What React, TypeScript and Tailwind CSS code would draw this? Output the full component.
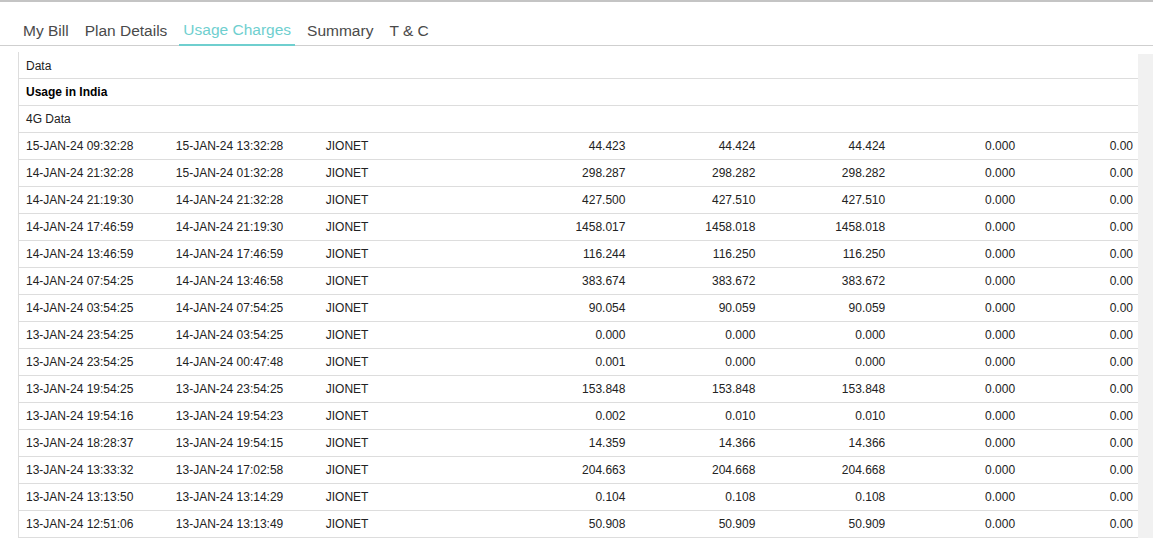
const rows = [
["15-JAN-24 09:32:28","15-JAN-24 13:32:28","44.423","44.424","44.424"],
["14-JAN-24 21:32:28","15-JAN-24 01:32:28","298.287","298.282","298.282"],
["14-JAN-24 21:19:30","14-JAN-24 21:32:28","427.500","427.510","427.510"],
["14-JAN-24 17:46:59","14-JAN-24 21:19:30","1458.017","1458.018","1458.018"],
["14-JAN-24 13:46:59","14-JAN-24 17:46:59","116.244","116.250","116.250"],
["14-JAN-24 07:54:25","14-JAN-24 13:46:58","383.674","383.672","383.672"],
["14-JAN-24 03:54:25","14-JAN-24 07:54:25","90.054","90.059","90.059"],
["13-JAN-24 23:54:25","14-JAN-24 03:54:25","0.000","0.000","0.000"],
["13-JAN-24 23:54:25","14-JAN-24 00:47:48","0.001","0.000","0.000"],
["13-JAN-24 19:54:25","13-JAN-24 23:54:25","153.848","153.848","153.848"],
["13-JAN-24 19:54:16","13-JAN-24 19:54:23","0.002","0.010","0.010"],
["13-JAN-24 18:28:37","13-JAN-24 19:54:15","14.359","14.366","14.366"],
["13-JAN-24 13:33:32","13-JAN-24 17:02:58","204.663","204.668","204.668"],
["13-JAN-24 13:13:50","13-JAN-24 13:14:29","0.104","0.108","0.108"],
["13-JAN-24 12:51:06","13-JAN-24 13:13:49","50.908","50.909","50.909"],
];
export default function App() {
  return (
    <div className="w-[1153px] h-[539px] overflow-hidden bg-white text-[#222]" style={{fontFamily:'"Liberation Sans", Arial, sans-serif'}}>
      <div className="h-[2px] bg-[#c4c4c4]" />
      <div className="flex gap-[8px] h-[44px] items-end border-b border-[#cfcfcf] pl-[19px] text-[15.5px] text-[#4a4a4a]">
        {["My Bill","Plan Details","Usage Charges","Summary","T & C"].map((t,i)=>(
          <div key={t} className={`px-[4px] pb-[3px] ${i===2?"text-[#6fcfcf] border-b-2 border-[#6fcfcf] mb-[-1px]":""}`}>{t}</div>
        ))}
      </div>
      <div className="flex">
        <div className="ml-[18px] w-[1120px] border-l border-[#ddd] text-[12px] mt-[6px]">
          <div className="h-[27px] flex items-center px-[7px] border-b border-[#ddd] pt-[1px]">Data</div>
          <div className="h-[27px] flex items-center px-[7px] border-b border-[#ddd] font-bold text-black">Usage in India</div>
          <div className="h-[27px] flex items-center px-[7px] border-b border-[#ddd]">4G Data</div>
          {rows.map((r,i)=>(
            <div key={i} className="h-[27px] flex items-center border-b border-[#ddd]">
              <div className="w-[150px] pl-[7px]">{r[0]}</div>
              <div className="w-[150px] pl-[7px]">{r[1]}</div>
              <div className="w-[182px] pl-[7px]">JIONET</div>
              <div className="w-[130px] text-right pr-[5px]">{r[2]}</div>
              <div className="w-[130px] text-right pr-[5px]">{r[3]}</div>
              <div className="w-[130px] text-right pr-[5px]">{r[4]}</div>
              <div className="w-[130px] text-right pr-[5px]">0.000</div>
              <div className="w-[118px] text-right pr-[5px]">0.00</div>
            </div>
          ))}
        </div>
        <div className="w-[15px] mt-[8px] bg-[#f1f1f1]" />
      </div>
    </div>
  );
}
